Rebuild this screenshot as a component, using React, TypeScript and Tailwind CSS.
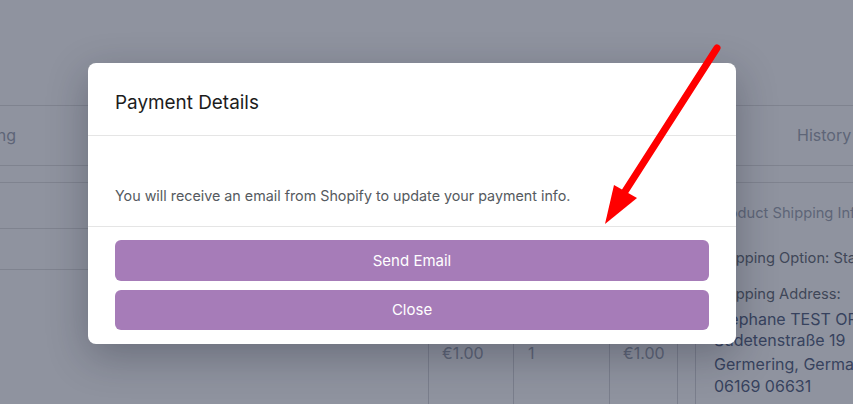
export default function App() {
  return (
    <div className="relative w-[853px] h-[404px] overflow-hidden bg-white font-['Inter',sans-serif]">
      {/* Page behind the modal */}
      <div className="pt-[105px]">
        {/* Table header */}
        <div className="flex h-[61px] items-center border-y border-[#dfdfdf] text-[16px] text-[#9ca3af]">
          <div className="flex w-[16px] justify-end whitespace-nowrap pb-[1px]">Billing</div>
          <div className="flex-1" />
          <div className="w-[56px] whitespace-nowrap pb-[1px]">History</div>
        </div>
        <div className="h-[17px] border-b border-[#dfdfdf]" />

        {/* Order row */}
        <div className="flex">
          <div className="w-[428px] shrink-0">
            <div className="h-[46px] border-b border-[#dfdfdf]" />
            <div className="h-[41px] border-b border-[#dfdfdf]" />
          </div>
          <div className="w-[85px] shrink-0 border-l border-[#d4d4d8] pl-[13px] pt-[158px] text-[16px] text-[#9ca3af]">€1.00</div>
          <div className="w-[96px] shrink-0 border-l border-[#d4d4d8] pl-[14px] pt-[158px] text-[16px] text-[#9ca3af]">1</div>
          <div className="w-[68px] shrink-0 border-l border-[#d4d4d8] pl-[13px] pt-[158px] text-[16px] text-[#9ca3af]">€1.00</div>
          <div className="w-[18px] shrink-0 border-l border-[#d4d4d8]" />
          <div className="h-[260px] flex-1 border-l border-[#d4d4d8] pl-[18px] pt-[19px] whitespace-nowrap">
            <p className="text-[14.7px] leading-[22px] text-[#9ca3af]">Product Shipping Info</p>
            <p className="mt-[23px] text-[14.7px] leading-[22px] text-[#5f6771]">Shipping Option: Standard</p>
            <p className="mt-[14px] text-[14.7px] leading-[22px] text-[#5f6771]">Shipping Address:</p>
            <div className="mt-[3px] text-[16px] leading-[22.33px] text-[#4f5d7c]">
              <p>Stephane TEST ORDER</p>
              <p className="-mt-[1px]">Sudetenstraße 19</p>
              <p className="mt-[1px]">Germering, Germany</p>
              <p>06169 06631</p>
            </div>
          </div>
        </div>
      </div>

      {/* Backdrop */}
      <div className="absolute inset-0 bg-[#1f273f]/50" />

      {/* Modal */}
      <div className="absolute left-[88px] top-[63px] w-[648px] h-[281px] rounded-lg bg-white shadow-[0_12px_40px_rgba(20,24,40,0.3)] flex flex-col">
        <div className="h-[73px] border-b border-[#e5e5e5] px-[27px] pt-[26px]">
          <h2 className="text-[18.9px] leading-[28px] text-[#1c1c1c]">Payment Details</h2>
        </div>
        <div className="border-b border-[#e5e5e5] px-[27px] pt-[50px] pb-[20px]">
          <p className="text-[14.3px] leading-[20px] text-[#555a60]">
            You will receive an email from Shopify to update your payment info.
          </p>
        </div>
        <div className="flex flex-col gap-[9px] px-[27px] pt-[13px]">
          <button className="h-[41px] w-full rounded-[6px] bg-[#a67cb8] pt-[1px] text-[15px] text-white">Send Email</button>
          <button className="h-[40px] w-full rounded-[6px] bg-[#a67cb8] pt-[1px] text-[15px] text-white">Close</button>
        </div>
      </div>

      {/* Annotation arrow */}
      <svg className="pointer-events-none absolute inset-0" width="853" height="404" viewBox="0 0 853 404">
        <line x1="717" y1="48" x2="624" y2="193" stroke="#ff0000" strokeWidth="7" strokeLinecap="round" />
        <polygon points="605,224 614,185 637,198" fill="#ff0000" />
      </svg>
    </div>
  );
}
